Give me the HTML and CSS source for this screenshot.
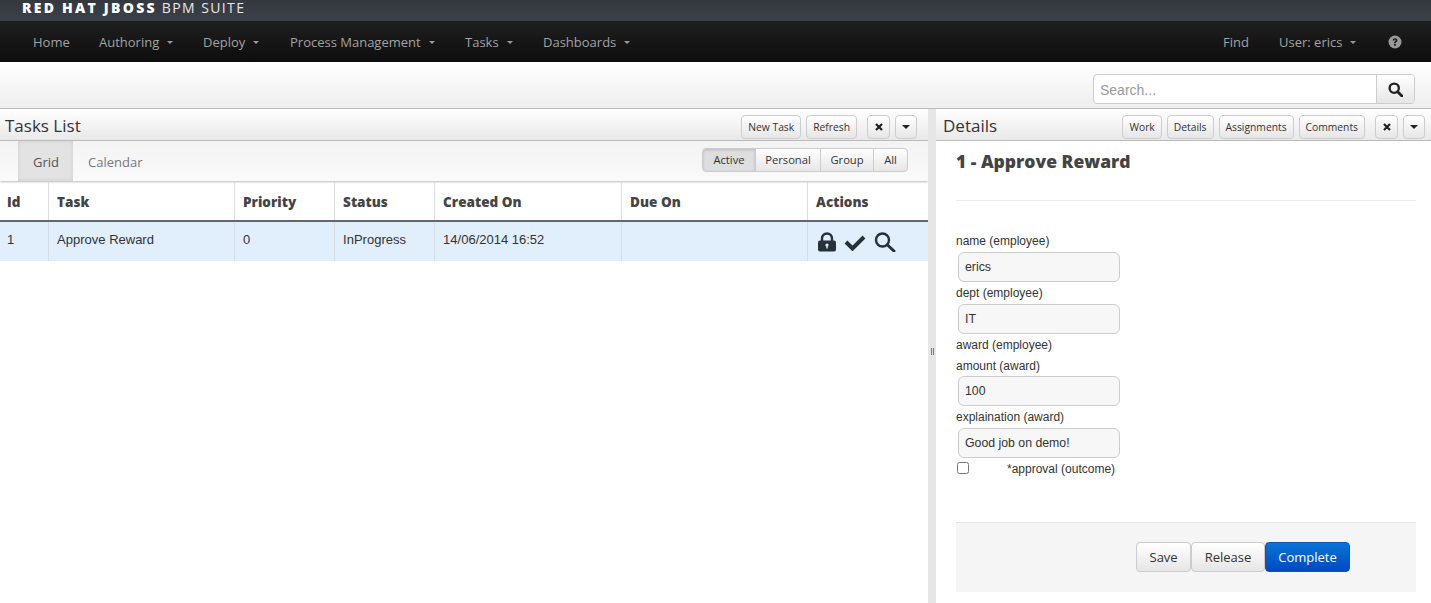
FILE: index.html
```html
<!DOCTYPE html>
<html lang="en">
<head>
	<meta charset="UTF-8">
	<title>Tasks List</title>
	<link rel="stylesheet" href="styles.css">
</head>
<body>
	<div class="brand"><b>RED HAT JBOSS</b> BPM SUITE</div>
	<div class="nav">
		<a class="nav-home">Home</a>
		<a class="nav-authoring">Authoring<i class="caret"></i></a>
		<a class="nav-deploy">Deploy<i class="caret"></i></a>
		<a class="nav-process">Process Management<i class="caret"></i></a>
		<a class="nav-tasks">Tasks<i class="caret"></i></a>
		<a>Dashboards<i class="caret"></i></a>
		<span class="nav-right">
			<a class="nav-find">Find</a>
			<a class="nav-user">User: erics<i class="caret"></i></a>
			<svg class="help" width="14" height="14" viewBox="0 0 14 14"><circle cx="7" cy="7" r="6.5" fill="#999"/><path d="M4.7 5.4c.1-1.4 1.1-2.2 2.4-2.2 1.300 0 2.300.8 2.300 2 0 1.700-1.700 1.600-1.700 3H6.100c0-2 1.500-2 1.500-2.900 0-.4-.2-.7-.6-.7-.5 0-.7.300-.8.8zM6.100 9.100h1.700v1.700H6.100z" fill="#1a1a1a"/></svg>
		</span>
	</div>
	<div class="toolbar">
		<div class="search">
			<div class="search-input">Search...</div>
			<div class="search-btn">
				<svg width="15" height="15" viewBox="0 0 14 14"><circle cx="5.800" cy="5.800" r="4.300" fill="none" stroke="#222" stroke-width="2.200"/><path d="M9 9l4 4" stroke="#222" stroke-width="2.600" stroke-linecap="round"/></svg>
			</div>
		</div>
	</div>
	<div class="main">
		<div class="panel-left">
			<div class="panel-head">
				<span class="panel-title">Tasks List</span>
				<button class="btn">New Task</button>
				<button class="btn">Refresh</button>
				<button class="btn btn-icon btn-close"><svg width="8" height="8" viewBox="0 0 8 8"><path d="M1 1l6 6M7 1L1 7" stroke="#222" stroke-width="2.200"/></svg></button>
				<button class="btn btn-icon btn-caret"><i class="caret caret-dark"></i></button>
			</div>
			<div class="tabs">
				<a class="tab active">Grid</a>
				<a class="tab">Calendar</a>
				<div class="filter">
					<span class="filter-item filter-active">Active</span>
					<span class="filter-item filter-personal">Personal</span>
					<span class="filter-item filter-group">Group</span>
					<span class="filter-item filter-all">All</span>
				</div>
			</div>
			<table class="grid">
				<thead>
					<tr>
						<th class="col-id">Id</th>
						<th class="col-task">Task</th>
						<th class="col-priority">Priority</th>
						<th class="col-status">Status</th>
						<th class="col-created">Created On</th>
						<th class="col-due">Due On</th>
						<th>Actions</th>
					</tr>
				</thead>
				<tbody>
					<tr>
						<td>1</td>
						<td>Approve Reward</td>
						<td>0</td>
						<td>InProgress</td>
						<td>14/06/2014 16:52</td>
						<td></td>
						<td class="actions">
							<svg width="20" height="20" viewBox="0 0 20 20"><path d="M5 9V6.500a5 5 0 0 1 10 0V9" fill="none" stroke="#263238" stroke-width="2.400"/><rect x="1" y="8.500" width="18" height="11" rx="2" fill="#263238"/><circle cx="10" cy="13" r="1.600" fill="#e1eefc"/><rect x="9.300" y="13.500" width="1.400" height="3" fill="#e1eefc"/></svg>
							<svg width="22" height="18" viewBox="0 0 22 18"><path d="M2 9l6.500 6.500L20 4" fill="none" stroke="#263238" stroke-width="4"/></svg>
							<svg width="22" height="20" viewBox="0 0 22 20"><circle cx="8.500" cy="8" r="6.500" fill="none" stroke="#263238" stroke-width="2.400"/><path d="M13.500 13l6.500 6" stroke="#263238" stroke-width="3" stroke-linecap="round"/></svg>
						</td>
					</tr>
				</tbody>
			</table>
		</div>
		<div class="splitter"><i></i></div>
		<div class="panel-right">
			<div class="panel-head">
				<span class="panel-title">Details</span>
				<button class="btn">Work</button>
				<button class="btn">Details</button>
				<button class="btn">Assignments</button>
				<button class="btn">Comments</button>
				<button class="btn btn-icon btn-close"><svg width="8" height="8" viewBox="0 0 8 8"><path d="M1 1l6 6M7 1L1 7" stroke="#222" stroke-width="2.200"/></svg></button>
				<button class="btn btn-icon btn-caret"><i class="caret caret-dark"></i></button>
			</div>
			<div class="details">
				<h3>1 - Approve Reward</h3>
				<form class="task-form">
					<label>name (employee)</label>
					<div class="field">erics</div>
					<label>dept (employee)</label>
					<div class="field">IT</div>
					<label class="label-short">award (employee)</label>
					<label class="label-short">amount (award)</label>
					<div class="field">100</div>
					<label>explaination (award)</label>
					<div class="field">Good job on demo!</div>
					<div class="check-row">
						<input type="checkbox">
						<label>*approval (outcome)</label>
					</div>
				</form>
				<div class="form-footer">
					<button class="act">Save</button>
					<button class="act">Release</button>
					<button class="act act-primary">Complete</button>
				</div>
			</div>
		</div>
	</div>
</body>
</html>
```

FILE: styles.css
```css
*{
	margin: 0;
	padding: 0;
	box-sizing: border-box;
}
html, body{
	height: 100%;
	overflow: hidden;
}
body{
	display: flex;
	flex-direction: column;
	background: #fff;
	font-family: "Liberation Sans", Arial, sans-serif;
	font-size: 12px;
	color: #333;
}
.brand{
	height: 21px;
	padding: 0 0 0 22px;
	background: linear-gradient(#34383f, #3c4149);
	color: #e8e8e8;
	font-family: "Open Sans", sans-serif;
	font-size: 14px;
	line-height: 15px;
	letter-spacing: 1.400px;
	white-space: nowrap;
}
.brand b{
	color: #fff;
	font-weight: 800;
	letter-spacing: 2.250px;
}
.nav{
	height: 41px;
	display: flex;
	align-items: center;
	padding-left: 33px;
	background: linear-gradient(#1f1f1f, #0d0d0d);
	font-family: "Open Sans", sans-serif;
	font-size: 13px;
	color: #a3a3a3;
	white-space: nowrap;
}
.nav a{
	display: block;
}
.nav-home{
	width: 66px;
}
.nav-authoring{
	width: 104px;
}
.nav-deploy{
	width: 87px;
}
.nav-process{
	width: 175px;
}
.nav-tasks{
	width: 78px;
}
.nav-right{
	margin-left: auto;
	display: flex;
	align-items: center;
	padding-right: 29px;
}
.nav-find{
	width: 56px;
}
.nav-user{
	width: 109px;
}
.help{
	display: block;
}
.caret{
	display: inline-block;
	width: 0;
	height: 0;
	margin-left: 8px;
	vertical-align: 3px;
	border-top: 3px solid #999;
	border-left: 3px solid transparent;
	border-right: 3px solid transparent;
}
.caret-dark{
	margin: 0;
	vertical-align: 4px;
	border-top: 4px solid #222;
	border-left: 4px solid transparent;
	border-right: 4px solid transparent;
}
.toolbar{
	height: 47px;
	display: flex;
	justify-content: flex-end;
	padding: 12px 16px 0 0;
	background: linear-gradient(#fff, #eee);
	border-bottom: 1px solid #bbb;
}
.search{
	width: 322px;
	height: 30px;
	display: flex;
	background: #fff;
	border: 1px solid #ccc;
	border-radius: 4px;
}
.search-input{
	flex: 1;
	padding-left: 6px;
	font-size: 14px;
	line-height: 30px;
	color: #999;
}
.search-btn{
	width: 38px;
	display: flex;
	align-items: center;
	justify-content: center;
	background: linear-gradient(#fff, #e6e6e6);
	border-left: 1px solid #ccc;
	border-radius: 0 3px 3px 0;
}
.main{
	flex: 1;
	display: flex;
	min-height: 0;
}
.panel-left{
	width: 928px;
}
.splitter{
	width: 8px;
	display: flex;
	align-items: center;
	justify-content: center;
	background: #e6e6e6;
}
.splitter i{
	width: 3px;
	height: 7px;
	margin-top: -10px;
	border-left: 1px solid #777;
	border-right: 1px solid #777;
}
.panel-right{
	flex: 1;
}
.panel-head{
	height: 32px;
	display: flex;
	align-items: flex-start;
	gap: 5px;
	padding: 6px 6px 0 5px;
	background: linear-gradient(#fff, #e9e9e9);
	border-bottom: 1px solid #bbb;
}
.panel-left .panel-head{
	padding-right: 11px;
}
.panel-right .panel-head{
	padding-left: 7px;
}
.panel-title{
	margin-right: auto;
	font-family: "Open Sans", sans-serif;
	font-size: 17px;
	line-height: 21px;
	color: #333;
}
.btn{
	height: 24px;
	padding: 0 6px;
	background: linear-gradient(#fff, #e6e6e6);
	border: 1px solid #ccc;
	border-radius: 4px;
	font-family: "Open Sans", sans-serif;
	font-size: 10.300px;
	color: #333;
}
.btn-icon{
	width: 23px;
	padding: 0;
	display: flex;
	align-items: center;
	justify-content: center;
}
.btn-caret{
	width: 22px;
}
.btn-close{
	margin-left: 5px;
}
.tabs{
	height: 40px;
	display: flex;
	padding: 0 20px 0 18px;
	background: linear-gradient(#f3f3f3, #fafafa);
	font-family: "Open Sans", sans-serif;
	font-size: 13px;
	line-height: 42px;
	color: #777;
	box-shadow: 0 1px 2px #bbb;
}
.tab{
	padding: 0 15px;
}
.tab.active{
	width: 55px;
	background: #e3e3e3;
	box-shadow: inset 0 0 4px #ccc;
	color: #555;
}
.filter{
	margin: 7px 0 0 auto;
	height: 24px;
	display: flex;
	background: linear-gradient(#fff, #e6e6e6);
	border: 1px solid #ccc;
	border-radius: 4px;
	font-size: 11.200px;
	line-height: 22px;
	color: #333;
}
.filter-item{
	text-align: center;
	border-left: 1px solid #ccc;
}
.filter-item:first-child{
	border-left: 0;
}
.filter-active{
	width: 52px;
	background: #dedede;
	box-shadow: inset 0 1px 3px #bbb;
	border-radius: 3px 0 0 3px;
}
.filter-personal{
	width: 65px;
}
.filter-group{
	width: 53px;
}
.filter-all{
	width: 34px;
}
.grid{
	width: 928px;
	table-layout: fixed;
	border-collapse: collapse;
	margin-top: 1px;
}
.col-id{
	width: 48px;
}
.col-task{
	width: 186px;
}
.col-priority{
	width: 100px;
}
.col-status{
	width: 100px;
}
.col-created{
	width: 187px;
}
.col-due{
	width: 186px;
}
.grid th{
	height: 39px;
	padding: 2px 0 0 8.600px;
	border-left: 1px solid #ddd;
	border-bottom: 2px solid #666;
	text-align: left;
	font-family: "Open Sans", sans-serif;
	font-size: 13.500px;
	font-weight: 800;
	color: #444;
}
.grid td{
	height: 40px;
	padding: 0 0 4px 8.600px;
	background: #e1eefc;
	border-left: 1px solid #d5dde6;
	font-size: 13px;
	color: #333;
}
.grid th:first-child, .grid td:first-child{
	padding-left: 7px;
	border-left: 0;
}
.grid .actions{
	padding: 0 0 0 9px;
	font-size: 0;
}
.actions svg{
	vertical-align: middle;
	margin-right: 7.500px;
}
.details{
	padding: 0 15px 0 20px;
}
.details h3{
	padding-top: 8px;
	height: 60px;
	border-bottom: 1px solid #eee;
	font-family: "Open Sans", sans-serif;
	font-size: 17.500px;
	font-weight: 800;
	line-height: 24px;
	color: #444;
}
.task-form{
	padding-top: 29px;
	height: 321px;
	font-size: 12px;
}
.task-form label{
	display: block;
	height: 22px;
	line-height: 22px;
	color: #333;
}
.task-form .label-short{
	height: 21px;
}
.field{
	width: 162px;
	height: 30px;
	margin-left: 2px;
	padding-left: 6px;
	background: #f7f7f7;
	border: 1px solid #ccc;
	border-radius: 6px;
	font-size: 12.300px;
	line-height: 28px;
	color: #333;
}
.check-row{
	height: 20px;
	display: flex;
	align-items: center;
}
.check-row input{
	width: 12px;
	height: 12px;
	margin: 0 0 0 1px;
}
.task-form .check-row label{
	margin-left: 38px;
	line-height: 24px;
}
.form-footer{
	height: 70px;
	display: flex;
	padding: 19px 0 0 180px;
	background: #f5f5f5;
	border-top: 1px solid #e5e5e5;
}
.act{
	height: 30px;
	padding: 0 12.500px;
	background: linear-gradient(#fff, #e6e6e6);
	border: 1px solid #ccc;
	border-radius: 4px;
	font-family: "Open Sans", sans-serif;
	font-size: 13px;
	color: #333;
}
.act-primary{
	background: linear-gradient(#0a74d8, #0049c0);
	border-color: #0a55b5;
	color: #fff;
}
```
